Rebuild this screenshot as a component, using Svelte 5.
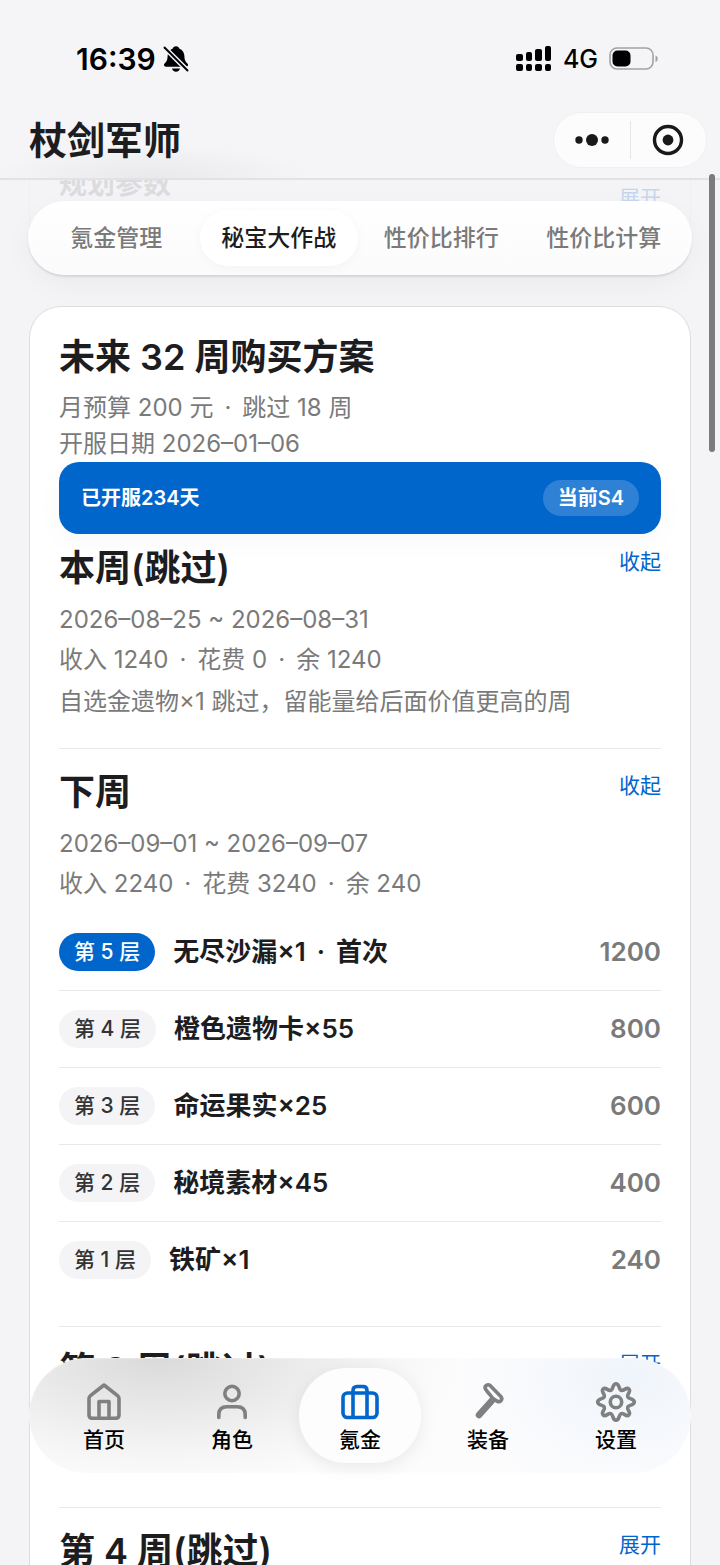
<script>
  const tabs = ['氪金管理', '秘宝大作战', '性价比排行', '性价比计算'];
  let activeTab = $state('秘宝大作战');

  const navItems = [
    { id: 'home', label: '首页' },
    { id: 'role', label: '角色' },
    { id: 'budget', label: '氪金' },
    { id: 'gear', label: '装备' },
    { id: 'settings', label: '设置' }
  ];
  let activeNav = $state('budget');

  let weeks = $state([
    {
      title: '本周(跳过)',
      open: true,
      range: '2026–08–25 ~ 2026–08–31',
      summary: ['收入 1240', '花费 0', '余 1240'],
      note: '自选金遗物×1 跳过，留能量给后面价值更高的周',
      tiers: []
    },
    {
      title: '下周',
      open: true,
      range: '2026–09–01 ~ 2026–09–07',
      summary: ['收入 2240', '花费 3240', '余 240'],
      tiers: [
        { level: 5, name: ['无尽沙漏×1', '首次'], cost: 1200, first: true },
        { level: 4, name: ['橙色遗物卡×55'], cost: 800 },
        { level: 3, name: ['命运果实×25'], cost: 600 },
        { level: 2, name: ['秘境素材×45'], cost: 400 },
        { level: 1, name: ['铁矿×1'], cost: 240 }
      ]
    },
    { title: '第 3 周(跳过)', open: false, tiers: [] },
    { title: '第 4 周(跳过)', open: false, tiers: [] }
  ]);
</script>

{#snippet dotted(parts)}
  {#each parts as part, i}{#if i}<span class="dot">·</span>{/if}{part}{/each}
{/snippet}

<div class="app">
  <header class="header">
    <div class="status">
      <span class="time">16:39</span>
      <svg class="bell" width="26" height="28" viewBox="0 0 26 28" aria-hidden="true">
        <path d="M13 1.200c1.800 0 2.900 1 3.200 2.200 3.400 1.300 5.100 4.100 5.200 7.700.1 4.200 1.100 5.600 3.200 7.700 1 1.100.4 2.900-1.400 2.900H2.800c-1.800 0-2.400-1.800-1.400-2.900 2.100-2.100 3.100-3.500 3.200-7.700.1-3.600 1.800-6.400 5.200-7.700.3-1.200 1.400-2.200 3.200-2.200z" />
        <path d="M9 23.500h8c-.3 1.900-2 3.200-4 3.200s-3.700-1.300-4-3.200z" />
        <path d="M1 2 25 26" stroke="#f5f5f7" stroke-width="4.800" />
        <path d="M1.500 2.500 24.500 25.500" stroke="#000" stroke-width="1.900" stroke-linecap="round" />
      </svg>
      <span class="spacer"></span>
      <svg width="36" height="26" viewBox="0 0 36 26" aria-hidden="true">
        <rect x="0" y="8" width="7" height="7" rx="2" />
        <rect x="10" y="6" width="6" height="9" rx="2" />
        <rect x="19" y="3" width="7" height="12" rx="2" />
        <rect x="29" y="0" width="6" height="15" rx="2" />
        <rect x="0" y="18" width="7" height="7" rx="2" />
        <rect x="10" y="18" width="6" height="7" rx="2" />
        <rect x="19" y="18" width="7" height="7" rx="2" />
        <rect x="29" y="18" width="6" height="7" rx="2" />
      </svg>
      <span class="network">4G</span>
      <svg width="50" height="24" viewBox="0 0 50 24" aria-hidden="true">
        <rect x="1" y="1" width="43" height="21" rx="7" fill="none" stroke="#a2a2a6" stroke-width="1.600" />
        <rect x="3.500" y="3.500" width="18" height="16" rx="5" />
        <path d="M46.500 8.500c3 .8 3 5.700 0 6.500z" fill="#a2a2a6" />
      </svg>
    </div>
    <div class="titlebar">
      <h1>杖剑军师</h1>
      <div class="capsule">
        <button aria-label="更多">
          <svg width="36" height="16" viewBox="0 0 36 16">
            <circle cx="5" cy="8" r="3.700" />
            <circle cx="18" cy="8" r="6" />
            <circle cx="31" cy="8" r="3.700" />
          </svg>
        </button>
        <span class="bar"></span>
        <button aria-label="关闭">
          <svg width="32" height="32" viewBox="0 0 32 32">
            <circle cx="16" cy="16" r="13.500" fill="none" stroke="#191919" stroke-width="3.400" />
            <circle cx="16" cy="16" r="5.400" />
          </svg>
        </button>
      </div>
    </div>
  </header>

  <main class="content">
    <section class="params">
      <h2>规划参数</h2>
      <button class="toggle">展开</button>
    </section>

    <section class="card">
      <h2>未来 32 周购买方案</h2>
      <div class="meta">
        <p>{@render dotted(['月预算 200 元', '跳过 18 周'])}</p>
        <p>开服日期 2026–01–06</p>
      </div>
      <div class="banner">
        <span>已开服234天</span>
        <span class="season">当前S4</span>
      </div>

      {#each weeks as week}
        <section class="week" class:collapsed={!week.open}>
          <div class="week-head">
            <h2>{week.title}</h2>
            <button class="toggle" onclick={() => (week.open = !week.open)}>
              {week.open ? '收起' : '展开'}
            </button>
          </div>
          {#if week.open && week.range}
            <p class="line">{week.range}</p>
            <p class="line">{@render dotted(week.summary)}</p>
            {#if week.note}
              <p class="line note">{week.note}</p>
            {/if}
            {#if week.tiers.length}
              <ul class="tiers">
                {#each week.tiers as tier}
                  <li>
                    <span class="tier" class:first={tier.first}>第 {tier.level} 层</span>
                    <span class="name">{@render dotted(tier.name)}</span>
                    <span class="cost">{tier.cost}</span>
                  </li>
                {/each}
              </ul>
            {/if}
          {/if}
        </section>
      {/each}
    </section>
  </main>

  <div class="tabs" role="tablist">
    {#each tabs as tab}
      <button
        role="tab"
        aria-selected={activeTab === tab}
        class:active={activeTab === tab}
        onclick={() => (activeTab = tab)}>{tab}</button>
    {/each}
  </div>

  <nav class="nav">
    {#each navItems as item}
      <button class:active={activeNav === item.id} onclick={() => (activeNav = item.id)}>
        <svg width="42" height="42" viewBox="0 0 42 42" aria-hidden="true">
          {#if item.id === 'home'}
            <path d="M6 17.500c0-1.300.5-2 1.500-2.800L21 4l13.500 10.700c1 .8 1.500 1.500 1.500 2.800V34c0 2.200-1 3.200-3.200 3.200H9.200C7 37.200 6 36.200 6 34z" />
            <path d="M16 37V20.500h10V37" />
          {:else if item.id === 'role'}
            <circle cx="21" cy="12.500" r="7.200" />
            <path d="M7.800 36.500v-2.700c0-5.200 3-8 8-8h10.400c5 0 8 2.800 8 8v2.700" />
          {:else if item.id === 'budget'}
            <rect x="4" y="12" width="34" height="24.500" rx="4.500" />
            <path d="M14 36V9.500C14 7 15.300 5.500 18 5.500h6c2.700 0 4 1.500 4 4V36" />
          {:else if item.id === 'gear'}
            <path d="M18.600 8.200c-1.800-3 2-5.700 4.500-3.700l10.700 11c2.600 3.200-.9 6.300-3.800 4.600-1.400-1-2.600-1.400-3.800-2.500-1.300-1.200-1.800-2.200-3-3.600-1.500-1.800-3.300-3.400-4.600-5.800z" />
            <path d="M25 19.500 12 34" stroke-width="6.500" />
          {:else}
            <circle cx="21" cy="21" r="5.700" />
            <path d="M21 2.700C24.600 2.700 23.500 8.200 26.200 9.300C28.900 10.400 31.400 5.500 33.900 8.100C36.500 10.600 31.600 13.100 32.700 15.800C33.800 18.500 39.300 17.400 39.300 21C39.300 24.600 33.800 23.500 32.700 26.200C31.600 28.900 36.500 31.400 33.900 33.900C31.400 36.500 28.900 31.600 26.200 32.700C23.500 33.800 24.600 39.300 21 39.300C17.400 39.300 18.500 33.800 15.800 32.700C13.100 31.600 10.600 36.500 8.100 33.900C5.500 31.400 10.400 28.900 9.300 26.200C8.200 23.500 2.700 24.600 2.700 21C2.700 17.400 8.200 18.500 9.300 15.800C10.400 13.100 5.500 10.600 8.100 8.100C10.600 5.500 13.100 10.400 15.800 9.300C18.500 8.200 17.400 2.700 21 2.700Z" />
          {/if}
        </svg>
        <span>{item.label}</span>
      </button>
    {/each}
  </nav>

  <div class="scrollbar"></div>
</div>

<style>
:global(body) {
  margin: 0;
  background: #f4f4f7;
}

.app {
  position: relative;
  display: flex;
  flex-direction: column;
  height: 100vh;
  overflow: hidden;
  background: #f4f4f7;
  color: #1d1d1f;
  font-family: Inter, "Noto Sans CJK SC", sans-serif;
}

h1, h2, p, ul {
  margin: 0;
  padding: 0;
}

button {
  padding: 0;
  border: none;
  background: none;
  color: inherit;
  font-family: inherit;
  cursor: pointer;
}

svg {
  display: block;
  flex: none;
}

.header {
  flex: none;
  padding: 41px 13px 10px 29px;
  border-bottom: 2px solid #e2e2e5;
  background: radial-gradient(ellipse 160px 34px at 150px 100%, #e9e9eb, #f5f5f7);
}

.status {
  display: flex;
  align-items: center;
  height: 36px;
  padding: 0 48px 0 47px;
  color: #000;
}

.time {
  font-size: 30px;
  font-weight: 600;
}

.bell {
  margin-left: 7px;
}

.spacer {
  flex: 1;
}

.network {
  margin: 0 11px;
  font-size: 25px;
  font-weight: 500;
}

.titlebar {
  display: flex;
  align-items: center;
  justify-content: space-between;
  margin-top: 35px;
}

h1 {
  font-size: 38px;
  font-weight: 600;
  line-height: 56px;
}

.capsule {
  display: flex;
  align-items: center;
  box-sizing: border-box;
  width: 154px;
  height: 56px;
  border: 1px solid #f0f0f1;
  border-radius: 28px;
  background: #fcfcfd;
}

.capsule button {
  display: flex;
  flex: 1;
  justify-content: center;
  fill: #191919;
}

.bar {
  width: 1px;
  height: 38px;
  background: #e6e6e8;
}

.content {
  flex: 1;
  min-height: 0;
  padding: 0 29px;
  overflow-y: auto;
  scrollbar-width: none;
}

.params {
  display: flex;
  justify-content: space-between;
  align-items: flex-start;
  height: 70px;
  margin-bottom: 55px;
  padding: 0 29px;
  border: 1px solid #efeff2;
  border-top: none;
}

.params h2 {
  color: #dcdcdf;
  font-size: 28px;
  line-height: 8px;
}

.params .toggle {
  color: #c6d6ec;
  line-height: 36px;
}

.card {
  padding: 24px 29px;
  border: 1px solid #dedee1;
  border-radius: 32px;
  background: #fff;
}

h2 {
  font-size: 36px;
  font-weight: 600;
  line-height: 52px;
}

.meta {
  margin-top: 7px;
  color: #7a7a7a;
  font-size: 24px;
  font-weight: 400;
  line-height: 36px;
}

.dot {
  margin: 0 11px;
}

.banner {
  display: flex;
  align-items: center;
  justify-content: space-between;
  margin-bottom: 8px;
  padding: 18px 22px;
  border-radius: 20px;
  background: #0066cc;
  box-shadow: 0 8px 28px rgba(0, 0, 0, 0.03);
  color: #fff;
  font-size: 20px;
  font-weight: 600;
  line-height: 36px;
}

.season {
  padding: 0 15px;
  border-radius: 18px;
  background: rgba(255, 255, 255, 0.18);
}

.week {
  padding-bottom: 28px;
}

.week + .week {
  padding-top: 17px;
  border-top: 1px solid #e9e9eb;
}

.collapsed {
  min-height: 135px;
}

.week-head {
  display: flex;
  justify-content: space-between;
  align-items: flex-start;
  margin-bottom: 8px;
}

.toggle {
  color: #0066cc;
  font-size: 21px;
  font-weight: 400;
  line-height: 40px;
}

.line {
  margin-top: 4px;
  color: #7a7a7a;
  font-size: 24px;
  font-weight: 400;
  line-height: 36px;
}

.week-head + .line {
  margin-top: 0;
}

.note {
  margin-top: 6px;
}

.tiers {
  margin-top: 12px;
  list-style: none;
}

.tiers li {
  display: flex;
  align-items: center;
  gap: 18px;
  height: 76px;
}

.tiers li + li {
  border-top: 1px solid #e9e9eb;
}

.tier {
  padding: 0 15px;
  border-radius: 19px;
  background: #f4f4f7;
  color: #333;
  font-size: 21px;
  font-weight: 500;
  line-height: 38px;
}

.tier.first {
  background: #0066cc;
  color: #fff;
}

.name,
.cost {
  font-size: 26px;
  font-weight: 600;
  line-height: 38px;
}

.name {
  flex: 1;
}

.cost {
  color: #7a7a7a;
}

.tabs {
  position: absolute;
  top: 201px;
  left: 28px;
  right: 28px;
  display: grid;
  grid-template-columns: repeat(4, 1fr);
  gap: 4px;
  padding: 9px;
  border-radius: 38px;
  background: linear-gradient(#fff, #fbfbfc);
  box-shadow: 0 2px 2px rgba(0, 0, 0, 0.1), 0 10px 30px rgba(0, 0, 0, 0.04);
}

.tabs button {
  border-radius: 28px;
  color: #7a7a7a;
  font-size: 23px;
  font-weight: 500;
  line-height: 56px;
}

.tabs .active {
  background: #fff;
  box-shadow: 0 2px 12px rgba(0, 0, 0, 0.04);
  color: #1d1d1f;
}

.nav {
  position: absolute;
  bottom: 92px;
  left: 29px;
  right: 29px;
  display: grid;
  grid-template-columns: repeat(5, 1fr);
  gap: 6px;
  padding: 10px 14px;
  border-radius: 58px;
  background:
    radial-gradient(ellipse 300px 130px at 130px 0, #dadada, rgba(244, 244, 244, 0.8) 75%, transparent),
    radial-gradient(ellipse 170px 120px at 600px 20px, #f0f5fb, transparent),
    #fcfcfd;
  box-shadow: inset 0 0 2px #fff;
  color: #000;
}

.nav button {
  display: flex;
  flex-direction: column;
  align-items: center;
  padding: 13px 0 7px;
  border-radius: 47px;
  font-size: 21px;
  font-weight: 500;
  line-height: 32px;
}

.nav span {
  margin-top: 1px;
}

.nav svg {
  fill: none;
  stroke: #808080;
  stroke-width: 3.6;
  stroke-linecap: round;
  stroke-linejoin: round;
}

.nav .active {
  background: #fdfdfd;
  box-shadow: 0 4px 18px rgba(0, 0, 0, 0.08);
}

.nav .active svg {
  stroke: #0066cc;
}

.scrollbar {
  position: absolute;
  top: 174px;
  right: 5px;
  width: 6px;
  height: 278px;
  border-radius: 3px;
  background: #7b7b7d;
}
</style>
